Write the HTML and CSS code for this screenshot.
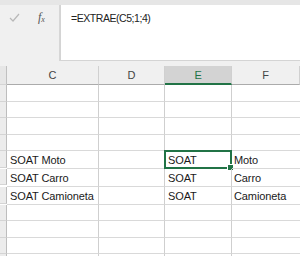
FILE: index.html
```html
<!DOCTYPE html>
<html>
<head>
<meta charset="utf-8">
<link rel="stylesheet" href="styles.css">
</head>
<body>
<div class="app">
  <div class="fbar">
    <div class="fbar-tools">
      <svg class="check" width="11" height="9" viewBox="0 0 11 9"><path d="M1 5 L4 8 L10 1" fill="none" stroke="#b8b8b8" stroke-width="1.2"/></svg>
      <span class="fx">f<sub>x</sub></span>
    </div>
    <div class="finput">=EXTRAE(C5;1;4)</div>
  </div>
  <div class="grid">
    <div class="ch rh"></div><div class="ch">C</div><div class="ch">D</div><div class="ch sel">E</div><div class="ch last">F</div>

    <div class="rh r17"></div><div class="c"></div><div class="c"></div><div class="c"></div><div class="c last"></div>
    <div class="rh r16"></div><div class="c"></div><div class="c"></div><div class="c"></div><div class="c last"></div>
    <div class="rh r17"></div><div class="c"></div><div class="c"></div><div class="c"></div><div class="c last"></div>
    <div class="rh r16"></div><div class="c"></div><div class="c"></div><div class="c"></div><div class="c last"></div>
    <div class="rh r17"></div><div class="c">SOAT Moto</div><div class="c"></div><div class="c active">SOAT<span class="handle"></span></div><div class="c last">Moto</div>
    <div class="rh r16"></div><div class="c">SOAT Carro</div><div class="c"></div><div class="c">SOAT</div><div class="c last">Carro</div>
    <div class="rh r17"></div><div class="c">SOAT Camioneta</div><div class="c"></div><div class="c">SOAT</div><div class="c last">Camioneta</div>
    <div class="rh r16"></div><div class="c"></div><div class="c"></div><div class="c"></div><div class="c last"></div>
    <div class="rh r17"></div><div class="c"></div><div class="c"></div><div class="c"></div><div class="c last"></div>
    <div class="rh r16"></div><div class="c"></div><div class="c"></div><div class="c"></div><div class="c last"></div>
    <div class="rh r17"></div><div class="c"></div><div class="c"></div><div class="c"></div><div class="c last"></div>
  </div>
</div>
</body>
</html>
```

FILE: styles.css
```css
html, body {
  margin: 0;
  padding: 0;
  background: #f0f0f0;
  overflow: hidden;
}
.app {
  width: 300px;
  height: 256px;
  overflow: hidden;
  font-family: "Liberation Sans", Arial, sans-serif;
}
.fbar {
  display: flex;
  height: 61px;
  border-top: 5px solid #e6e6e6;
  box-sizing: border-box;
  background: #f0f0f0;
  margin-bottom: 5px;
}
.fbar-tools {
  width: 60px;
  display: flex;
  align-items: flex-start;
  padding-top: 5px;
  box-sizing: border-box;
  border-right: 1px solid #d6d6d6;
}
.check {
  margin-left: 9px;
  margin-top: 3px;
}
.fx {
  margin-left: 18px;
  font-family: "Liberation Serif", serif;
  font-style: italic;
  font-size: 12px;
  color: #555;
  line-height: 14px;
}
.fx sub {
  font-size: 8px;
  vertical-align: -1px;
}
.finput {
  flex: 1;
  background: #fff;
  border: 1px solid #d4d4d4;
  border-right: none;
  border-top: none;
  padding: 7px 0 0 10px;
  font-size: 10.5px;
  letter-spacing: -0.45px;
  color: #222;
  line-height: 12px;
}
.grid {
  display: grid;
  grid-template-columns: 7px 92px 66px 67px 68px;
  grid-auto-rows: auto;
  background: #fff;
}
.grid > div {
  box-sizing: border-box;
  font-size: 11px;
  color: #1a1a1a;
  letter-spacing: -0.1px;
  white-space: nowrap;
}
.ch {
  height: 19px;
  background: #f0f0f0;
  border-right: 1px solid #d0d0d0;
  border-bottom: 1px solid #ababab;
  text-align: center;
  line-height: 19px;
  font-size: 10.5px;
  color: #444 !important;
}
.ch.sel {
  background: #d3d3d3;
  color: #217346 !important;
  border-bottom: 2px solid #217346;
  line-height: 18px;
}
.ch.rh {
  background: #e6e6e6;
  border-right: 1px solid #c0c0c0;
}
.rh {
  background: #ececec;
  border-right: 1px solid #bdbdbd;
  border-bottom: 1px solid #d4d4d4;
}
.r17 { height: 17px; }
.r16 { height: 16px; }
.c {
  position: relative;
  border-right: 1px solid #cfcfcf;
  border-bottom: 1px solid #d9d9d9;
  padding-left: 3px;
  padding-top: 1px;
  line-height: 16px;
}
.c.last {
  border-right: none;
  padding-left: 2px;
}
.c.active::before {
  content: "";
  position: absolute;
  left: -1px;
  top: -1px;
  right: -1px;
  bottom: -1px;
  border: 2px solid #217346;
}
.handle {
  position: absolute;
  right: -3px;
  bottom: -3px;
  width: 5px;
  height: 5px;
  background: #217346;
  border: 1px solid #fff;
  box-sizing: content-box;
}
```
